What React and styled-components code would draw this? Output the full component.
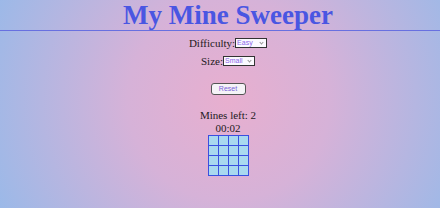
import React from "react";
import styled, { createGlobalStyle } from "styled-components";

const Global = createGlobalStyle`
  html, body { margin: 0; padding: 0; height: 100%; }
  body {
    font-family: "Liberation Serif", "Times New Roman", serif;
    background: radial-gradient(circle farthest-corner at 52% 48%, #e8afcf 0%, #d6b2d8 40%, #9bb9e8 100%);
    background-attachment: fixed;
    min-height: 208px;
  }
  #root { min-height: 208px; }
`;

const Header = styled.header`
  width: 100%;
  border-bottom: 1px solid #6870e0;
  padding-left: 16px;
  box-sizing: border-box;
`;

const Title = styled.h1`
  margin: 0;
  text-align: center;
  font-size: 27px;
  line-height: 30px;
  font-weight: bold;
  color: #4a56e2;
`;

const Main = styled.main`
  display: flex;
  flex-direction: column;
  align-items: center;
  padding-left: 16px;
  color: #1e1a22;
`;

const Row = styled.div`
  display: flex;
  align-items: center;
  justify-content: center;
  height: 16px;
  margin-top: ${(p) => p.$mt}px;
  font-size: 11px;
`;

const SelectWrap = styled.span`
  position: relative;
  display: inline-flex;
`;

const Select = styled.select`
  appearance: none;
  -webkit-appearance: none;
  width: 32px;
  height: 10px;
  padding: 0 0 0 1px;
  margin: 0;
  border: 1px solid #333;
  border-radius: 0;
  background: #fbfaff;
  color: #8a66ea;
  font-family: "Liberation Sans", Arial, sans-serif;
  font-size: 7px;
  line-height: 8px;
  box-sizing: border-box;
  outline: none;
`;

const Arrow = styled.span`
  position: absolute;
  right: 4px;
  top: 3px;
  width: 2px;
  height: 2px;
  border-right: 1px solid #999;
  border-bottom: 1px solid #999;
  transform: rotate(45deg);
  pointer-events: none;
`;

const Button = styled.button`
  margin-top: 14px;
  width: 35px;
  height: 12px;
  padding: 0;
  border: 1px solid #555;
  border-radius: 3px;
  background: #f5f3f7;
  color: #7a62d8;
  font-family: "Liberation Sans", Arial, sans-serif;
  font-size: 7px;
  line-height: 10px;
  box-sizing: border-box;
`;

const Info = styled.div`
  font-size: 11px;
  line-height: ${(p) => p.$lh}px;
  margin-top: ${(p) => p.$mt}px;
  text-align: center;
`;

const Board = styled.table`
  border-collapse: collapse;
  margin-top: 1px;
`;

const Cell = styled.td`
  width: 9px;
  height: 9px;
  padding: 0;
  background: #a9d9ef;
  border: 1px solid #3a50e0;
  box-sizing: content-box;
`;

function Dropdown({ value, options }) {
  return (
    <SelectWrap>
      <Select defaultValue={value}>
        {options.map((o) => (
          <option key={o}>{o}</option>
        ))}
      </Select>
      <Arrow />
    </SelectWrap>
  );
}

export default function App() {
  const rows = [0, 1, 2, 3];
  return (
    <>
      <Global />
      <Header>
        <Title>My Mine Sweeper</Title>
      </Header>
      <Main>
        <Row $mt={4}>
          Difficulty:
          <Dropdown value="Easy" options={["Easy", "Medium", "Hard"]} />
        </Row>
        <Row $mt={2}>
          Size:
          <Dropdown value="Small" options={["Small", "Medium", "Large"]} />
        </Row>
        <Button>Reset</Button>
        <Info $lh={14} $mt={13}>Mines left: 2</Info>
        <Info $lh={12} $mt={0}>00:02</Info>
        <Board>
          <tbody>
            {rows.map((r) => (
              <tr key={r}>
                {rows.map((c) => (
                  <Cell key={c} />
                ))}
              </tr>
            ))}
          </tbody>
        </Board>
      </Main>
    </>
  );
}
